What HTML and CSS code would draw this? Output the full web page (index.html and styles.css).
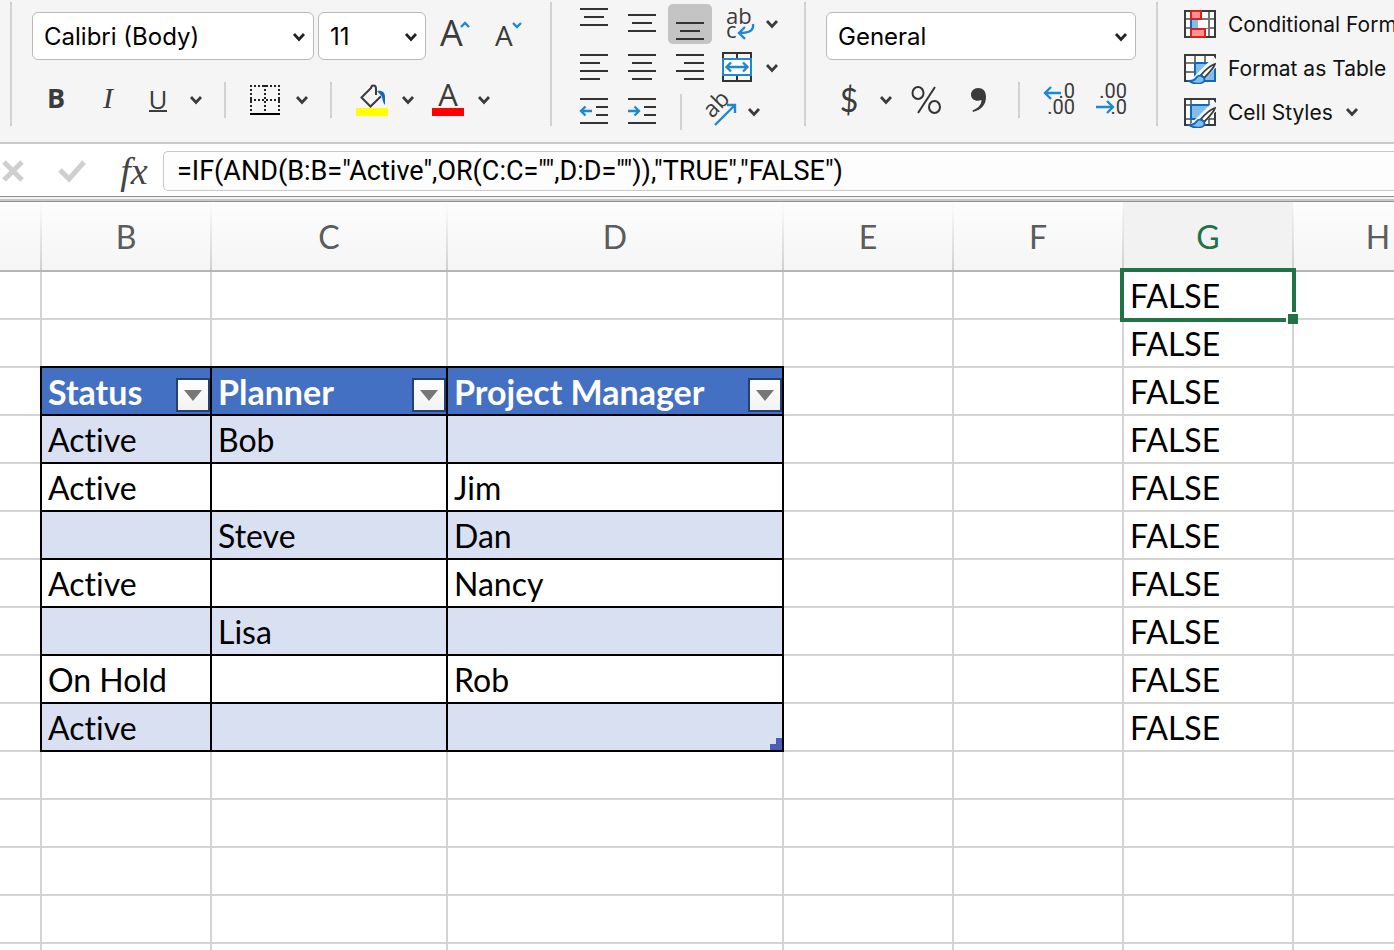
FILE: index.html
```html
<!DOCTYPE html>
<html lang="en">
<head>
<meta charset="utf-8">
<title>Workbook</title>
<link rel="stylesheet" href="styles.css">
</head>
<body>
<svg class="defs" aria-hidden="true">
  <symbol id="chevron" viewBox="0 0 14 10"><path d="M2 2l5 5.400 5-5.400" fill="none" stroke="currentColor" stroke-width="2.800"/></symbol>
  <symbol id="brush" viewBox="0 0 32 32">
    <path d="M33 8L10 31" stroke="#f5f5f5" stroke-width="9"/>
    <path d="M31 12C27 13 20 19 17 23l3 3C24 22 30 16 31 12z" fill="#fff" stroke="#3b3b3b" stroke-width="1.800"/>
    <path d="M5 29c4 0 6-1 7.500-3.500s5-2.500 7 0 1 4.500-2 5.500c-4 1-9 .5-12.500-2z" fill="#83bdec" stroke="#1068bd" stroke-width="1.800"/>
  </symbol>
</svg>
<div class="app">
  <header class="ribbon">
    <section class="group" aria-label="Font">
      <div class="fields">
        <label class="picker picker-font"><select aria-label="Font name"><option>Calibri (Body)</option></select><svg class="chev"><use href="#chevron"/></svg></label>
        <label class="picker picker-size"><select aria-label="Font size"><option>11</option></select><svg class="chev"><use href="#chevron"/></svg></label>
        <button class="tool tool-grow" aria-label="Increase font size">
          <svg width="32" height="36" viewBox="0 0 32 36"><text class="ico-text" x="0" y="28" font-size="36">A</text><path class="blue" d="M21 9l4-4 4 4"/></svg>
        </button>
        <button class="tool tool-shrink" aria-label="Decrease font size">
          <svg width="32" height="36" viewBox="0 0 32 36"><text class="ico-text" x="1" y="28" font-size="28">A</text><path class="blue" d="M19 5l4 4 4-4"/></svg>
        </button>
      </div>
      <div class="tools font-tools">
        <button class="tool bold" aria-label="Bold">B</button>
        <button class="tool italic" aria-label="Italic">I</button>
        <button class="tool under" aria-label="Underline">U</button>
        <button class="tool" aria-label="Underline options"><svg class="chev"><use href="#chevron"/></svg></button>
        <span class="rule"></span>
        <button class="tool" aria-label="Borders">
          <svg width="30" height="32" viewBox="0 0 30 32"><path d="M0 2h30M0 16h30M1 1v28M15 1v28M29 1v28" fill="none" stroke="#222" stroke-width="2" stroke-dasharray="2 2"/><path d="M0 30h30" stroke="#000" stroke-width="2"/></svg>
        </button>
        <button class="tool" aria-label="Border options"><svg class="chev"><use href="#chevron"/></svg></button>
        <span class="rule"></span>
        <button class="tool" aria-label="Fill color">
          <svg width="32" height="34" viewBox="0 0 32 34"><path d="M0 25h32v8H0z" fill="#ff0"/><path d="M15.500 4.500L5.500 14.500l9 9L25 13.200M15 5.500c0-4 5-4 5 0V12" fill="none" stroke="#3b3b3b" stroke-width="2"/><path d="M21 8c5-1 8 1 8 6v8c-2-2-2.500-5-3-8.500z" fill="#1068bd"/></svg>
        </button>
        <button class="tool" aria-label="Fill color options"><svg class="chev"><use href="#chevron"/></svg></button>
        <button class="tool" aria-label="Font color">
          <svg width="32" height="34" viewBox="0 0 32 34"><text class="ico-text" x="16" y="23" font-size="31" text-anchor="middle">A</text><path d="M0 25h32v8H0z" fill="#f00"/></svg>
        </button>
        <button class="tool" aria-label="Font color options"><svg class="chev"><use href="#chevron"/></svg></button>
      </div>
    </section>

    <section class="group align-group" aria-label="Alignment">
      <div class="tools align-row">
        <button class="tool" aria-label="Top align"><svg width="44" height="40"><path class="ink" d="M8 5h28M12 13h20M8 21h28"/></svg></button>
        <button class="tool" aria-label="Middle align"><svg width="44" height="40"><path class="ink" d="M8 11h28M12 19h20M8 27h28"/></svg></button>
        <button class="tool pressed" aria-label="Bottom align" aria-pressed="true"><svg width="44" height="40"><path class="ink" d="M8 19h28M12 27h20M8 35h28"/></svg></button>
        <button class="tool" aria-label="Wrap text"><svg width="44" height="40"><text class="ico-text" x="10" y="20" font-size="22">ab</text><text class="ico-text" x="10" y="34" font-size="22">c</text><path class="blue" d="M37 20c1 6-3 9-13 9M29 23l-6 6 6 6"/></svg></button>
        <button class="tool" aria-label="Wrap options"><svg class="chev"><use href="#chevron"/></svg></button>
      </div>
      <div class="tools align-row">
        <button class="tool" aria-label="Align left"><svg width="44" height="40"><path class="ink" d="M8 7h28M8 15h20M8 23h28M8 31h20"/></svg></button>
        <button class="tool" aria-label="Center"><svg width="44" height="40"><path class="ink" d="M8 7h28M12 15h20M8 23h28M12 31h20"/></svg></button>
        <button class="tool" aria-label="Align right"><svg width="44" height="40"><path class="ink" d="M8 7h28M16 15h20M8 23h28M16 31h20"/></svg></button>
        <button class="tool" aria-label="Merge and center"><svg width="44" height="40"><path class="ink" d="M7 5h28v28H7zM21 5v6M21 27v6"/><path d="M7 11h28v16H7z" fill="#fff" stroke="#1e88d2" stroke-width="2"/><path class="blue" d="M11 19h20M15 14.500L10.500 19l4.500 4.500M27 14.500l4.500 4.500-4.500 4.500"/></svg></button>
        <button class="tool" aria-label="Merge options"><svg class="chev"><use href="#chevron"/></svg></button>
      </div>
      <div class="tools indent-row">
        <button class="tool" aria-label="Decrease indent"><svg width="44" height="40"><path class="ink" d="M8 7h28M24 15h12M24 23h12M8 31h28"/><path class="blue" d="M20 19H9M13.500 14.500L9 19l4.500 4.500"/></svg></button>
        <button class="tool" aria-label="Increase indent"><svg width="44" height="40"><path class="ink" d="M8 7h28M24 15h12M24 23h12M8 31h28"/><path class="blue" d="M8 19h11M14.500 14.500L19 19l-4.500 4.500"/></svg></button>
        <span class="rule"></span>
        <button class="tool" aria-label="Orientation"><svg width="44" height="40"><text class="ico-text" x="0" y="0" font-size="23" transform="translate(14 27) rotate(-45)">ab</text><path class="blue" d="M17 33l20-20M29 13h8v8"/></svg></button>
        <button class="tool" aria-label="Orientation options"><svg class="chev"><use href="#chevron"/></svg></button>
      </div>
    </section>

    <section class="group" aria-label="Number">
      <div class="fields">
        <label class="picker picker-format"><select aria-label="Number format"><option>General</option></select><svg class="chev"><use href="#chevron"/></svg></label>
      </div>
      <div class="tools number-tools">
        <button class="tool currency" aria-label="Currency">$</button>
        <button class="tool" aria-label="Currency options"><svg class="chev"><use href="#chevron"/></svg></button>
        <button class="tool" aria-label="Percent"><svg width="32" height="32"><ellipse cx="8" cy="9" rx="5.500" ry="6" class="ink"/><ellipse cx="24.500" cy="23" rx="5.500" ry="6" class="ink"/><path class="ink" d="M25 3L8 29"/></svg></button>
        <button class="tool" aria-label="Comma style"><svg width="18" height="30"><path d="M8 3c5 0 8 3 8 9 0 8-5 13-13 15l-.5-1.500C8 23 11.500 20 11.500 15c-5 2-10.500 0-10.500-5.500C1 6 4 3 8 3z" fill="#3b3b3b"/></svg></button>
        <span class="rule"></span>
        <button class="tool" aria-label="Increase decimal"><svg width="34" height="36"><text class="ico-num" x="32" y="16" text-anchor="end">.0</text><text class="ico-num" x="32" y="32" text-anchor="end">.00</text><path class="blue" d="M18 11H2M8 5l-6 6 6 6"/></svg></button>
        <button class="tool" aria-label="Decrease decimal"><svg width="34" height="36"><text class="ico-num" x="32" y="16" text-anchor="end">.00</text><text class="ico-num" x="32" y="32" text-anchor="end">.0</text><path class="blue" d="M1 25h17M12 19l6 6-6 6"/></svg></button>
      </div>
    </section>

    <section class="group style-group" aria-label="Styles">
      <button class="style-btn">
        <svg width="32" height="32" viewBox="0 0 32 32"><path d="M1 3h30v26H1z" fill="#fff"/><path d="M1 11h30M1 20h30M7 3v26M25 3v26" stroke="#777" stroke-width="2"/><path d="M1 3h30v26H1z" fill="none" stroke="#3b3b3b" stroke-width="2"/><path d="M14 12h10v8H14z" fill="#fff"/><path d="M8 11h6v10H8z" fill="#83bdec"/><path d="M7 11v10" stroke="#1068bd" stroke-width="2"/><path d="M7 3h10v8H7zM7 21h14v8H7z" fill="#ff9192" stroke="#d8231b" stroke-width="2"/></svg>
        Conditional Formatting
      </button>
      <button class="style-btn">
        <svg width="32" height="32" viewBox="0 0 32 32"><path d="M1 3h30v26H1z" fill="#fff"/><path d="M1 11h30M1 20h30M11 3v26M21 3v26" stroke="#777" stroke-width="2"/><path d="M11 11h20v18H11z" fill="#83bdec" stroke="#1068bd" stroke-width="2"/><path d="M31 10V3H1v26h10" fill="none" stroke="#3b3b3b" stroke-width="2"/><use href="#brush" width="32" height="32"/></svg>
        Format as Table
      </button>
      <button class="style-btn">
        <svg width="32" height="32" viewBox="0 0 32 32"><path d="M1 3h30v26H1z" fill="#fff"/><path d="M1 9h30M1 23h30M7 3v26M25 3v26" stroke="#777" stroke-width="2"/><path d="M7 9h18v14H7z" fill="#83bdec" stroke="#1068bd" stroke-width="2"/><path d="M1 3h30v26H1z" fill="none" stroke="#3b3b3b" stroke-width="2"/><use href="#brush" width="32" height="32"/></svg>
        Cell Styles
        <svg class="chev"><use href="#chevron"/></svg>
      </button>
    </section>
  </header>

  <div class="formula-bar">
    <button class="fb-btn fb-cancel" aria-label="Cancel"><svg width="24" height="24"><path d="M3 3l18 18M21 3L3 21" stroke="#cfcfcf" stroke-width="5" fill="none"/></svg></button>
    <button class="fb-btn fb-enter" aria-label="Enter"><svg width="28" height="24"><path d="M2 11l9 9L26 3" stroke="#cfcfcf" stroke-width="5" fill="none"/></svg></button>
    <button class="fb-btn fb-fx" aria-label="Insert function">fx</button>
    <input class="formula" aria-label="Formula" value="=IF(AND(B:B=&quot;Active&quot;,OR(C:C=&quot;&quot;,D:D=&quot;&quot;)),&quot;TRUE&quot;,&quot;FALSE&quot;)">
  </div>
  <div class="splitter"></div>

  <main class="sheet">
    <table class="grid">
      <colgroup><col class="c-a"><col class="c-b"><col class="c-c"><col class="c-d"><col class="c-n"><col class="c-n"><col class="c-n"><col class="c-n"></colgroup>
      <thead>
        <tr><th></th><th>B</th><th>C</th><th>D</th><th>E</th><th>F</th><th class="current">G</th><th>H</th></tr>
      </thead>
      <tbody>
        <tr><td></td><td></td><td></td><td></td><td></td><td></td><td class="selected">FALSE<span class="cursor"></span><span class="handle"></span></td><td></td></tr>
        <tr><td></td><td></td><td></td><td></td><td></td><td></td><td>FALSE</td><td></td></tr>
        <tr class="list-head"><td></td>
          <td class="cell"><div class="head">Status<button class="filter" aria-label="Filter Status"></button></div></td>
          <td class="cell"><div class="head">Planner<button class="filter" aria-label="Filter Planner"></button></div></td>
          <td class="cell"><div class="head">Project Manager<button class="filter" aria-label="Filter Project Manager"></button></div></td>
          <td></td><td></td><td>FALSE</td><td></td></tr>
        <tr class="band"><td></td><td class="cell">Active</td><td class="cell">Bob</td><td class="cell"></td><td></td><td></td><td>FALSE</td><td></td></tr>
        <tr><td></td><td class="cell">Active</td><td class="cell"></td><td class="cell">Jim</td><td></td><td></td><td>FALSE</td><td></td></tr>
        <tr class="band"><td></td><td class="cell"></td><td class="cell">Steve</td><td class="cell">Dan</td><td></td><td></td><td>FALSE</td><td></td></tr>
        <tr><td></td><td class="cell">Active</td><td class="cell"></td><td class="cell">Nancy</td><td></td><td></td><td>FALSE</td><td></td></tr>
        <tr class="band"><td></td><td class="cell"></td><td class="cell">Lisa</td><td class="cell"></td><td></td><td></td><td>FALSE</td><td></td></tr>
        <tr><td></td><td class="cell">On Hold</td><td class="cell"></td><td class="cell">Rob</td><td></td><td></td><td>FALSE</td><td></td></tr>
        <tr class="band"><td></td><td class="cell">Active</td><td class="cell"></td><td class="cell list-end"></td><td></td><td></td><td>FALSE</td><td></td></tr>
        <tr><td></td><td></td><td></td><td></td><td></td><td></td><td></td><td></td></tr>
        <tr><td></td><td></td><td></td><td></td><td></td><td></td><td></td><td></td></tr>
        <tr><td></td><td></td><td></td><td></td><td></td><td></td><td></td><td></td></tr>
        <tr><td></td><td></td><td></td><td></td><td></td><td></td><td></td><td></td></tr>
        <tr><td></td><td></td><td></td><td></td><td></td><td></td><td></td><td></td></tr>
      </tbody>
    </table>
  </main>
</div>
</body>
</html>
```

FILE: styles.css
```css
* { box-sizing: border-box; }
body { margin: 0; background: #fff; color: #000; font-family: Inter, "Liberation Sans", sans-serif; }
button, select, input { font: inherit; color: inherit; margin: 0; }
button { border: 0; background: none; padding: 0; }
svg { display: block; flex: none; overflow: visible; }
.defs { position: absolute; width: 0; height: 0; }
.app { display: flex; flex-direction: column; height: 100vh; overflow: hidden; }

/* Ribbon */
.ribbon { display: flex; flex: none; padding: 2px 0 16px 10px; background: #f5f5f5; border-bottom: 2px solid #cbcbcb; overflow: hidden; color: #3b3b3b; }
.group { flex: none; height: 124px; padding: 10px 20px 0; border-left: 2px solid #d2d2d2; }
.group:first-child { padding-right: 24px; }
.fields { display: flex; gap: 4px; height: 48px; }
.picker { position: relative; display: block; height: 48px; }
.picker-font { width: 282px; }
.picker-size { width: 108px; }
.picker-format { width: 310px; }
.picker select { appearance: none; width: 100%; height: 100%; padding: 0 32px 0 11px; border: 1px solid #b9b9b9; border-radius: 6px; background: #fff; color: #000; font-size: 24px; }
.picker .chev { position: absolute; right: 8px; top: 20px; color: #222; }
.chev { width: 14px; height: 10px; }
.tools { display: grid; align-items: center; justify-items: center; }
.tool { display: flex; align-items: center; justify-content: center; }
.tool-grow { margin-left: 10px; }
.tool-shrink { margin-left: 18px; }
.font-tools { grid-template-columns: 48px 56px 44px 32px 26px 54px 20px 38px 44px 28px 52px 20px; height: 36px; margin-top: 22px; }
.number-tools { grid-template-columns: 46px 28px 52px 54px 26px 56px 48px; height: 36px; margin-top: 22px; }
.rule { width: 2px; height: 36px; background: #d2d2d2; }
.bold { padding-bottom: 4px; font: 700 27px/32px "Open Sans", sans-serif; }
.italic { padding-bottom: 4px; font: italic 30px/32px "Liberation Serif", serif; }
.under { width: 18px; border-bottom: 2px solid #3b3b3b; font: 26px/22px "Open Sans", sans-serif; }
.currency { font: 32px/36px Lato, sans-serif; }
.ico-text { font-family: "Open Sans", sans-serif; font-weight: 400; fill: #3b3b3b; }
.ico-num { font-family: Roboto, sans-serif; font-size: 20px; fill: #3b3b3b; }
.ink { fill: none; stroke: #333; stroke-width: 2; }
.blue { fill: none; stroke: #1e88d2; stroke-width: 2.4; }
.align-group { display: grid; grid-template-rows: 40px 40px 40px; gap: 4px; padding-top: 2px; width: 254px; }
.align-row { grid-template-columns: 44px 44px 44px 44px 16px; column-gap: 4px; justify-content: start; }
.indent-row { grid-template-columns: 48px 44px 34px 44px 24px; justify-content: start; }
.indent-row .tool:first-child { justify-self: start; }
.pressed { border-radius: 5px; background: #c4c4c4; }
.style-group { display: grid; grid-template-rows: 40px 40px 40px; gap: 4px; padding: 2px 0 0 26px; }
.style-btn { display: flex; align-items: center; gap: 12px; white-space: nowrap; font-size: 21px; color: #111; }
.style-btn .chev { color: #3b3b3b; }

/* Formula bar */
.formula-bar { display: flex; flex: none; align-items: center; height: 52px; padding: 2px 0 0 1px; background: #fff; }
.fb-btn { flex: none; }
.fb-enter { margin-left: 33px; }
.fb-fx { width: 44px; margin: 0 7px 0 26px; font: italic 38px/40px "Liberation Serif", serif; color: #444; }
.formula { flex: 1; min-width: 0; height: 40px; padding: 0 0 0 13px; border: 1px solid #c9c9c9; border-right: 0; border-radius: 5px 0 0 5px; background: #fdfdfd; font: 27px Roboto, sans-serif; }
.splitter { flex: none; height: 6px; border-top: 1px solid #929292; border-bottom: 1px solid #929292; background: linear-gradient(#f3f3f3 50%, #c8c8c8 50%); }

/* Worksheet */
.sheet { flex: 1; min-height: 0; overflow: hidden; }
.grid { table-layout: fixed; width: 1463px; border-collapse: collapse; font: 32px/42px Lato, sans-serif; font-variant-ligatures: none; }
.c-a { width: 41px; }
.c-b, .c-n { width: 170px; }
.c-c { width: 236px; }
.c-d { width: 336px; }
.grid th { height: 69px; padding: 2px 0 0; border-bottom: 2px double #b5b5b5; font-weight: 400; color: #5c5c5c;
  background: linear-gradient(#fdfdfd, #d0d0d0) left / 1px 100% no-repeat, linear-gradient(#fdfdfd, #d0d0d0) right / 1px 100% no-repeat, linear-gradient(#fdfdfd, #f5f5f5); }
.grid th:first-child { background: linear-gradient(#fdfdfd, #d0d0d0) right / 1px 100% no-repeat, linear-gradient(#fdfdfd, #f5f5f5); }
.grid th.current { color: #217346; background-color: #f2f2f2; background-image: linear-gradient(#f2f2f2, #d0d0d0), linear-gradient(#f2f2f2, #d0d0d0), linear-gradient(#f2f2f2, #f2f2f2); }
.grid td { position: relative; height: 48px; padding: 2px 0 0 6px; border: 2px solid #d4d4d4; white-space: nowrap; }
.grid td:first-child { border-left: 0; }
.grid td.cell { border: 2px double #000; }
.band .cell { background: #d9e0f2; }
.list-head .cell { background: #4470c4; color: #fff; font-weight: 700; font-size: 34px; }
.head { display: flex; align-items: center; justify-content: space-between; }
.filter { display: grid; place-items: center; width: 34px; height: 34px; margin-top: 6px; border: 2px solid #26406f; background: linear-gradient(#fff, #f2f2f2); }
.filter::before { content: ""; border: 9px solid transparent; border-top: 11px solid #777; border-bottom: 0; }
.cursor { position: absolute; inset: -4px; border: 4px solid #217346; }
.handle { position: absolute; right: -6px; bottom: -6px; width: 12px; height: 12px; border: solid #fff; border-width: 2px 0 0 2px; background: #217346; }
.list-end::after { content: ""; position: absolute; right: 0; bottom: 0; width: 12px; height: 12px; background: #4a5eb5; clip-path: polygon(50% 0, 100% 0, 100% 100%, 0 100%, 0 50%, 50% 50%); }
```
